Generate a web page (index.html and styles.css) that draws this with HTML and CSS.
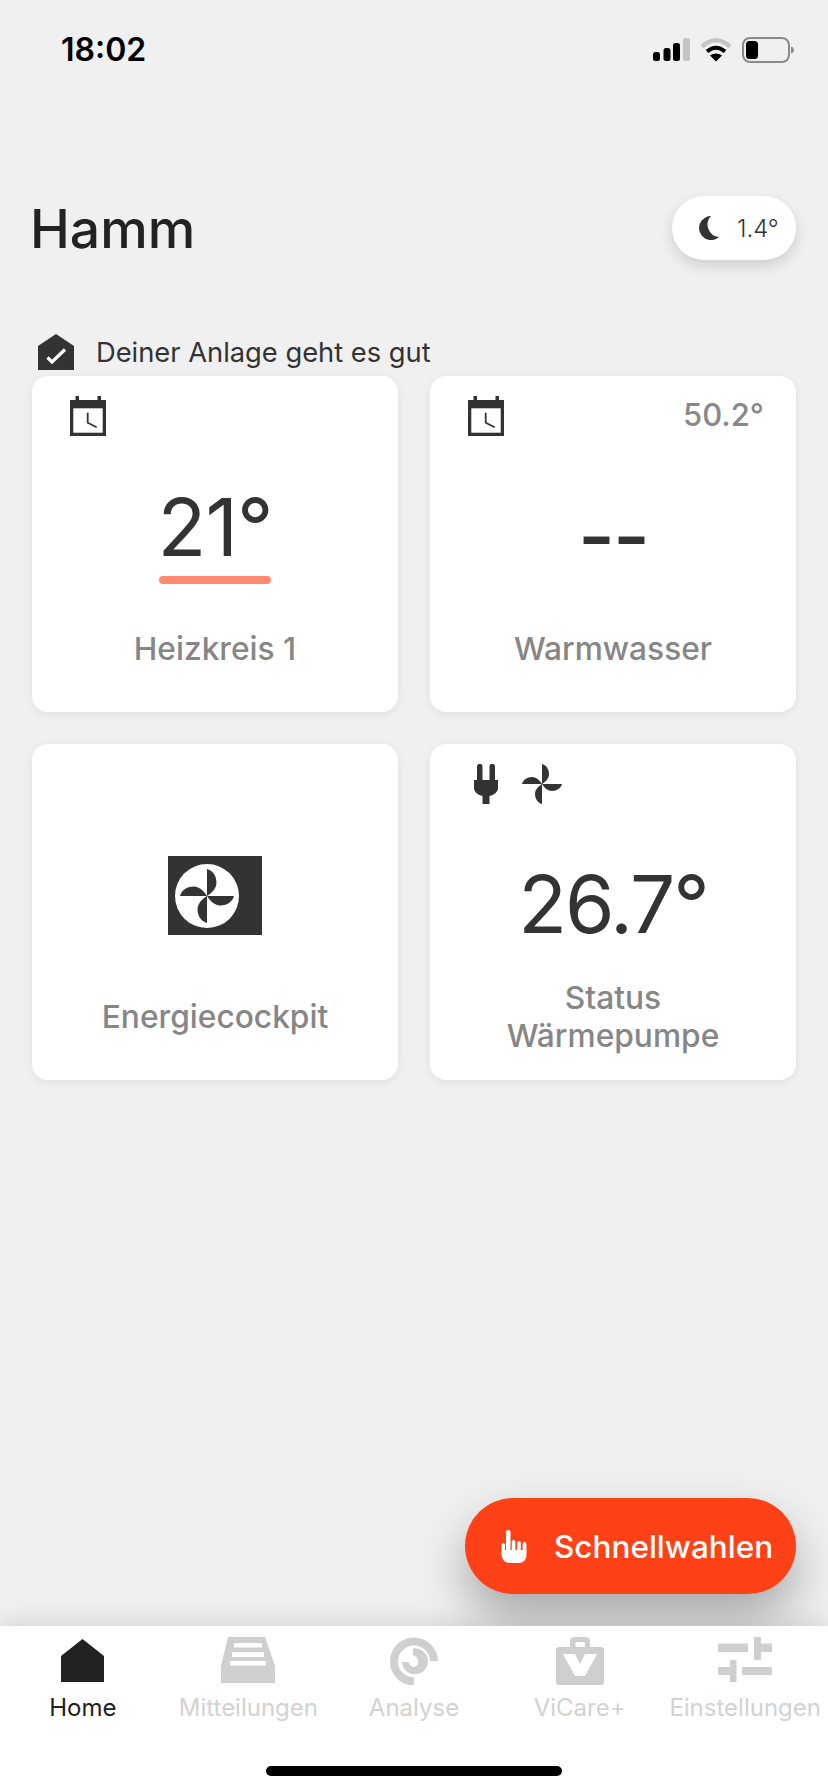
FILE: index.html
```html
<!DOCTYPE html>
<html lang="de">
<head>
<meta charset="utf-8">
<title>Hamm</title>
<link rel="stylesheet" href="styles.css">
</head>
<body>
<svg class="defs" width="0" height="0" aria-hidden="true">
  <defs>
    <symbol id="calendar" viewBox="0 0 36 40">
      <path fill="#333" d="M5.5 0H9V4H27.5V0H31V4H36V40H0V4H5.5Z"/>
      <rect x="3.3" y="12.3" width="29.4" height="24.4" fill="#fff"/>
      <path d="M17.7 16.7V26.7L26.7 31.3" fill="none" stroke="#333" stroke-width="1.8"/>
    </symbol>
    <symbol id="blades" viewBox="0 0 40 40">
      <g fill="#333">
        <path id="blade" d="M20 20V0C24 1 27 5 27 10C27 15 23 18 20 20Z"/>
        <use href="#blade" transform="rotate(90 20 20)"/>
        <use href="#blade" transform="rotate(180 20 20)"/>
        <use href="#blade" transform="rotate(270 20 20)"/>
      </g>
    </symbol>
  </defs>
</svg>
<div class="app">
  <header class="statusbar">
    <span class="clock">18:02</span>
    <div class="sys-icons">
      <svg class="sig" width="37" height="25" viewBox="0 0 37 25">
        <rect x="0" y="15" width="7" height="9" rx="2.5" fill="#000"/>
        <rect x="10.500" y="11" width="7" height="13" rx="2.500" fill="#000"/>
        <rect x="20" y="6" width="7" height="18" rx="2.500" fill="#000"/>
        <rect x="30" y="1" width="7" height="23" rx="2" fill="#c4c4c4"/>
      </svg>
      <svg class="wifi" width="32" height="25" viewBox="0 0 32 25">
        <path d="M2 9.500Q16 -3 30 9.500" fill="none" stroke="#c4c4c4" stroke-width="4.500"/>
        <path d="M7 14.500Q16 7 25 14.500" fill="none" stroke="#000" stroke-width="4"/>
        <path d="M16 24.500L10 18.500Q16 14.500 22 18.500Z" fill="#000"/>
      </svg>
      <svg class="batt" width="52" height="26" viewBox="0 0 52 26">
        <rect x="1" y="1" width="46" height="24" rx="7" fill="none" stroke="#8a8a8a" stroke-width="2"/>
        <rect x="4" y="4" width="12" height="18" rx="3.500" fill="#000"/>
        <path d="M49 9.500C51 10 52 11.500 52 13C52 14.500 51 16 49 16.500Z" fill="#8a8a8a"/>
      </svg>
    </div>
  </header>

  <section class="head">
    <h1 class="title">Hamm</h1>
    <div class="weather">
      <svg width="22" height="24" viewBox="0 0 22 24"><path fill="#333" d="M13 0A12 12 0 1 0 21 21A12.500 12.500 0 0 1 13 0Z"/></svg>
      <span class="weather-temp">1.4°</span>
    </div>
  </section>

  <div class="health">
    <svg width="36" height="36" viewBox="0 0 36 36">
      <path fill="#333" d="M18 0L36 12V36H0V12Z"/>
      <path d="M9.500 23.500L14 28L27 15.500" fill="none" stroke="#fff" stroke-width="3.200"/>
    </svg>
    <span class="health-text">Deiner Anlage geht es gut</span>
  </div>

  <main class="grid">
    <article class="card">
      <div class="card-top"><svg class="ic-cal"><use href="#calendar"/></svg></div>
      <div class="card-body">
        <div class="value value-set">21°</div>
        <div class="bar"></div>
      </div>
      <div class="label">Heizkreis 1</div>
    </article>
    <article class="card">
      <div class="card-top">
        <svg class="ic-cal"><use href="#calendar"/></svg>
        <span class="side-temp">50.2°</span>
      </div>
      <div class="card-body">
        <div class="value value-none">--</div>
      </div>
      <div class="label">Warmwasser</div>
    </article>
    <article class="card">
      <div class="card-top"></div>
      <div class="card-body">
        <svg class="cockpit" width="94" height="79" viewBox="0 0 94 79">
          <rect width="94" height="79" fill="#333"/>
          <circle cx="39" cy="40" r="32" fill="#fff"/>
          <svg x="12" y="13" width="54" height="54"><use href="#blades"/></svg>
        </svg>
      </div>
      <div class="label">Energiecockpit</div>
    </article>
    <article class="card">
      <div class="card-top card-top-pump">
        <svg width="24" height="40" viewBox="0 0 24 40">
          <path fill="#333" d="M3 2.500A2.500 2.500 0 0 1 8.500 2.500V16H15.500V2.500A2.500 2.500 0 0 1 21 2.500V16H24V24C24 28 20 31 15.500 32V40H8.500V32C4 31 0 28 0 24V16H3Z"/>
        </svg>
        <svg class="ic-fan"><use href="#blades"/></svg>
      </div>
      <div class="card-body">
        <div class="value value-pump">26.7°</div>
      </div>
      <div class="label">Status<br>Wärmepumpe</div>
    </article>
  </main>

  <div class="spacer"></div>

  <button class="fab" type="button">
    <svg width="26" height="33" viewBox="0 0 26 33">
      <g fill="#fff">
        <rect x="5" y="0" width="4.500" height="24" rx="2.200"/>
        <rect x="10.800" y="10" width="3.600" height="14" rx="1.800"/>
        <rect x="16.200" y="11" width="3.600" height="13" rx="1.800"/>
        <rect x="21.600" y="12" width="3.800" height="12" rx="1.900"/>
        <rect x="0.500" y="13" width="3.500" height="12" rx="1.700"/>
        <path d="M0.500 20H25.400V25C25.400 30 22 33 18 33H8C4 33 0.500 29 0.500 24Z"/>
      </g>
    </svg>
    <span>Schnellwahlen</span>
  </button>

  <nav class="tabbar">
    <div class="tabs">
      <div class="tab tab-active">
        <div class="tab-icon"><svg class="ic-home" width="43" height="43" viewBox="0 0 43 43"><path fill="#222" d="M21.500 0L43 17V43H0V17Z"/></svg></div>
        <span>Home</span>
      </div>
      <div class="tab">
        <div class="tab-icon"><svg width="54" height="46" viewBox="0 0 54 46">
          <path fill="#cfcfcf" d="M7 0H44L54 29V46H0V29Z"/>
          <path fill="#fff" d="M13 6H41V10.500H13ZM11 15H43V20H11ZM9 24H45V28.500H9Z"/>
        </svg></div>
        <span>Mitteilungen</span>
      </div>
      <div class="tab">
        <div class="tab-icon"><svg width="48" height="48" viewBox="0 0 48 48">
          <path d="M44 24A20 20 0 1 0 24 44.500" fill="none" stroke="#cfcfcf" stroke-width="8"/>
          <path fill="#cfcfcf" d="M23 11.500A13 13 0 1 1 12 25H18.500A6.500 6.500 0 0 0 24.500 30A6 6 0 0 0 23 18.500Z"/>
        </svg></div>
        <span>Analyse</span>
      </div>
      <div class="tab">
        <div class="tab-icon"><svg width="48" height="48" viewBox="0 0 48 48">
          <path fill="#cfcfcf" fill-rule="evenodd" d="M14 10V4C14 2 16 0 18 0H30C32 0 34 2 34 4V10H45C47 10 48 11 48 13V45C48 47 47 48 45 48H3C1 48 0 47 0 45V13C0 11 1 10 3 10ZM19.500 10H29V6.500C29 5.800 28.500 5 27.500 5H21C20 5 19.500 5.800 19.500 6.500Z"/>
          <path fill="#fff" d="M7 17H19L24 27L29 17H41L29 39H19Z"/>
        </svg></div>
        <span>ViCare+</span>
      </div>
      <div class="tab">
        <div class="tab-icon"><svg width="54" height="45" viewBox="0 0 54 45">
          <path fill="#cfcfcf" d="M0 6.500H30V15H0ZM36 0H43V6.500H54V15H43V23H36ZM12 23H18.500V45H12V38H0V30H12ZM24 30H54V38H24Z"/>
        </svg></div>
        <span>Einstellungen</span>
      </div>
    </div>
    <div class="home-indicator"></div>
  </nav>
</div>
</body>
</html>
```

FILE: styles.css
```css
* { box-sizing: border-box; }
html, body { margin: 0; padding: 0; }
body {
  width: 828px;
  height: 1792px;
  overflow: hidden;
  background: #f0f0f0;
  font-family: Inter, "Liberation Sans", sans-serif;
  color: #333;
}
.defs { display: block; height: 0; }
.app {
  width: 828px;
  height: 1792px;
  display: flex;
  flex-direction: column;
}
svg { display: block; flex: none; }

.statusbar {
  height: 99px;
  flex: none;
  padding: 0 34px 0 61px;
  display: flex;
  align-items: center;
  justify-content: space-between;
}
.clock { font-size: 32px; font-weight: 600; color: #000; }
.sys-icons { display: flex; align-items: center; gap: 10px; }

.head {
  margin-top: 97px;
  height: 64px;
  flex: none;
  padding: 0 32px 0 30px;
  display: flex;
  align-items: center;
  justify-content: space-between;
}
.title { margin: 0; font-size: 53.5px; font-weight: 450; color: #222; }
.weather {
  width: 124px;
  height: 64px;
  padding-left: 26px;
  display: flex;
  align-items: center;
  gap: 17px;
  background: #fff;
  border-radius: 32px;
  box-shadow: 0 6px 14px rgba(0, 0, 0, .14);
}
.weather-temp { font-size: 24px; font-weight: 300; color: #333; }

.health {
  margin: 74px 0 6px 38px;
  height: 36px;
  flex: none;
  display: flex;
  align-items: center;
  gap: 22px;
}
.health-text { font-size: 27.3px; color: #333; }

.grid {
  flex: none;
  padding: 0 32px;
  display: grid;
  grid-template-columns: 366px 366px;
  grid-auto-rows: 336px;
  gap: 32px;
}
.card {
  background: #fff;
  border-radius: 16px;
  box-shadow: 0 2px 8px rgba(0, 0, 0, .07);
  display: flex;
  flex-direction: column;
  align-items: stretch;
}
.card-top {
  height: 60px;
  padding: 20px 32px 0 38px;
  display: flex;
  justify-content: space-between;
  align-items: flex-start;
  flex: none;
}
.card-top-pump { justify-content: flex-start; padding-left: 44px; gap: 24px; }
.ic-cal { width: 36px; height: 40px; }
.ic-fan { width: 40px; height: 40px; }
.side-temp { font-size: 31px; font-weight: 500; color: #888; line-height: 38px; }

.card-body {
  height: 162px;
  flex: none;
  display: flex;
  flex-direction: column;
  align-items: center;
}
.value { font-size: 80px; font-weight: 400; line-height: 80px; color: #333; letter-spacing: -1px; }
.value-set { margin-top: 51px; }
.value-none { margin-top: 60px; font-weight: 500; letter-spacing: -2px; }
.value-pump { margin-top: 60px; letter-spacing: -2px; }
.bar { width: 112px; height: 8px; margin-top: 9px; border-radius: 4px; background: #ff8a70; }
.cockpit { margin-top: 52px; }

.label {
  height: 102px;
  flex: none;
  display: flex;
  align-items: center;
  justify-content: center;
  text-align: center;
  font-size: 31.7px;
  font-weight: 500;
  line-height: 38px;
  color: #868686;
}

.spacer { flex: 1; }

.fab {
  align-self: flex-end;
  flex: none;
  width: 331px;
  height: 96px;
  margin: 0 32px 32px 0;
  padding: 0 0 0 36px;
  border: 0;
  border-radius: 48px;
  background: #ff4117;
  color: #fff;
  font-family: inherit;
  font-size: 31.5px;
  font-weight: 500;
  display: flex;
  align-items: center;
  gap: 27px;
  box-shadow: 0 24px 48px rgba(0, 0, 0, .3);
}

.tabbar {
  position: relative;
  flex: none;
  height: 166px;
  background: #fff;
  box-shadow: 0 -6px 20px rgba(0, 0, 0, .1);
  padding-top: 11px;
}
.tabs { display: grid; grid-template-columns: repeat(5, 165.6px); }
.tab {
  display: flex;
  flex-direction: column;
  align-items: center;
  font-size: 24px;
  line-height: 30px;
  color: #d2d2d2;
  white-space: nowrap;
}
.tab-active { color: #222; }
.tab-icon { height: 48px; margin-bottom: 8px; }
.ic-home { margin-top: 2px; }
.home-indicator {
  width: 296px;
  height: 10px;
  margin: 43px auto 0;
  border-radius: 5px;
  background: #000;
}
```
